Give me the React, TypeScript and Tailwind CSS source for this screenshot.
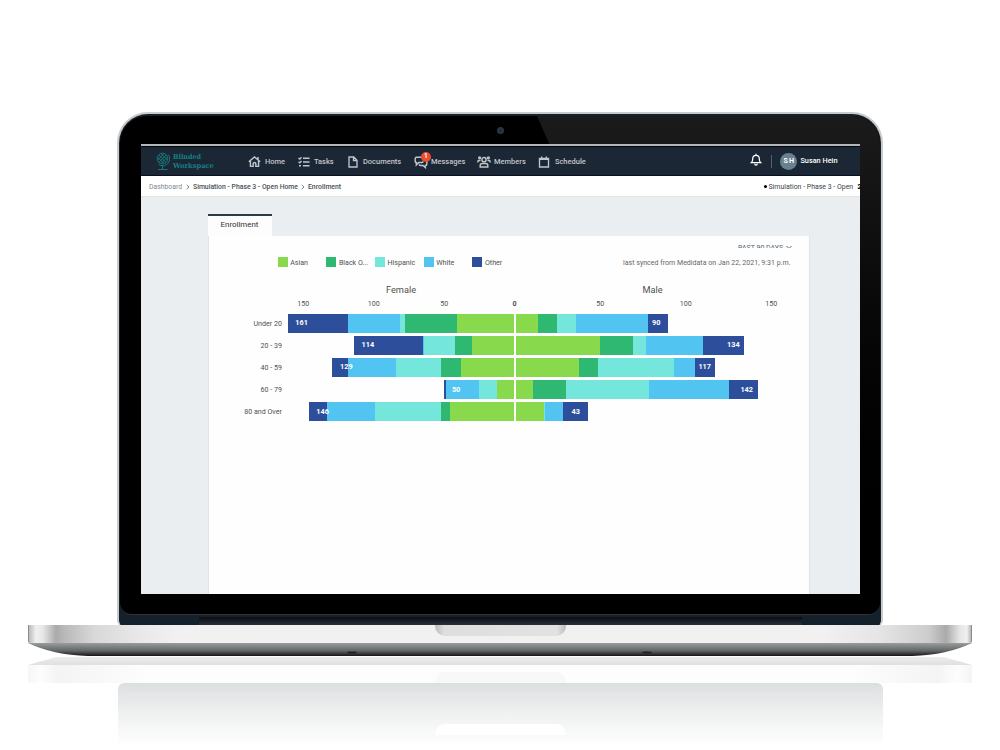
import React from "react";

const SERIES = [
  { name: "Asian", color: "bg-[#88da4c]" },
  { name: "Black O...", color: "bg-[#2fb872]" },
  { name: "Hispanic", color: "bg-[#74e6db]" },
  { name: "White", color: "bg-[#51c4f1]" },
  { name: "Other", color: "bg-[#2d4f9b]" },
];

// Segment widths run outwards from the zero line, in the order of SERIES
const ROWS = [
  { label: "Under 20", female: 161, male: 90, left: [57, 52, 4.3, 52.4, 60.3], right: [22.6, 19, 19, 71.7, 20.4], pad: 8 },
  { label: "20 - 39", female: 114, male: 134, left: [41.7, 17, 31, 1.3, 68.7], right: [84.3, 33, 13.5, 56.5, 40.7], pad: 4 },
  { label: "40 - 59", female: 129, male: 117, left: [52.7, 20, 45.3, 47.7, 15.6], right: [63.8, 18.5, 76, 20.8, 20.2], pad: 4 },
  { label: "60 - 79", female: 50, male: 142, left: [16.3, 0, 18.4, 33.3, 1.4], right: [17.8, 32.5, 83.5, 79.2, 29.3], pad: 5 },
  { label: "80 and Over", female: 146, male: 43, left: [64, 9, 66, 48, 18], right: [28.3, 0, 1.5, 17.3, 25.2], pad: 8 },
];

const icon = {
  viewBox: "0 0 24 24",
  fill: "none",
  stroke: "currentColor",
  strokeWidth: 2.7,
};

const HomeIcon = () => (
  <svg {...icon} className="w-[13px] h-[13px]">
    <path d="M1.5 12.500 12 3.500 22.500 12.500M4.500 10.500v10.500h5v-4.500a2.500 2.500 0 0 1 5 0v4.500h5V10.500M18.500 3.500v4.500" />
  </svg>
);

const TasksIcon = () => (
  <svg {...icon} className="w-[12px] h-[12px]">
    <path d="M10 4.500h13M10 12h13M10 19.500h13M1 4l2.500 2L7 2.500M1 11.500l2.500 2L7 10M2 19.500h4" />
  </svg>
);

const DocumentIcon = () => (
  <svg {...icon} className="w-[12px] h-[12px]">
    <path d="M4 2h9.500L20 8.500V22H4zM13 2v7h7" />
  </svg>
);

const MessagesIcon = () => (
  <svg {...icon} className="w-[14px] h-[14px]" strokeWidth={2.5}>
    <path d="M13 4H4.500Q2 4 2 6.500v4Q2 13 4 13v4l4-4h5q2.500 0 2.500-2.500" />
    <path d="M22 10v5.500q0 2.500-2.500 2.500v3.500L15.500 18H11q-2 0-2-2" />
  </svg>
);

const MembersIcon = () => (
  <svg {...icon} className="w-[14px] h-[14px]" strokeWidth={2.5}>
    <circle cx="12" cy="8" r="3.600" />
    <circle cx="4.500" cy="4.800" r="1.600" />
    <circle cx="19.500" cy="4.800" r="1.600" />
    <path d="M5.500 20.500V18q0-3.500 3.500-3.500h6q3.500 0 3.500 3.500v2.500zM1.500 13v-2q0-1.500 1.500-1.500h3M22.500 13v-2q0-1.500-1.500-1.500h-3" />
  </svg>
);

const CalendarIcon = () => (
  <svg {...icon} className="w-[12px] h-[12px]">
    <path d="M3 5h18v17H3zM3 6.500h18M7.500 1v4M16.500 1v4" />
  </svg>
);

const BellIcon = () => (
  <svg {...icon} className="mb-[3px] w-[12px] h-[13px] text-white" strokeWidth={2.5}>
    <path d="M3 18h18c-2-2-2.500-3.500-2.500-8a6.500 6.500 0 0 0-13 0c0 4.500-.5 6-2.500 8zM12 .500v3M9.500 20.500a2.500 2.500 0 0 0 5 0" />
  </svg>
);

const GlobeLogo = () => (
  <svg viewBox="0 0 14 19" className="mb-px w-[14px] h-[19px]" fill="none" stroke="#168085" strokeWidth="0.9">
    <circle cx="6.500" cy="6.500" r="5.300" />
    <path d="M2.800 3 10 10.300M5 1.700l6.400 6.400M1.500 5l6.300 6.300M10.200 3 3 10.200M8 1.700 1.600 8.100M11.500 5l-6.300 6.300" />
    <path d="M12.300 2.500a7 7 0 0 1-9.800 9.800M6.500 13.500v3.500M2 17.500h9.500" />
  </svg>
);

const NAV = [
  { label: "Home", Icon: HomeIcon, box: "w-[50px]", gap: "gap-[4px]" },
  { label: "Tasks", Icon: TasksIcon, box: "w-[49px]", gap: "gap-[4px]" },
  { label: "Documents", Icon: DocumentIcon, box: "w-[67px]", gap: "gap-[4px]" },
  { label: "Messages", Icon: MessagesIcon, box: "w-[63px]", gap: "gap-[3px]", badge: "1" },
  { label: "Members", Icon: MembersIcon, box: "w-[61px]", gap: "gap-[3px]" },
  { label: "Schedule", Icon: CalendarIcon, box: "w-[60px]", gap: "gap-[5px]" },
];

const TopBar = () => (
  <header className="flex h-[32px] shrink-0 items-center border-t-2 border-b border-t-[#b4b7b8] border-b-[#080f20] bg-[#1c2735] pt-[2px] text-[#c0c5cb] shadow-[inset_0_1px_0_#050709]">
    <div className="ml-[15px] flex w-[92.400px] items-center gap-[3px]">
      <GlobeLogo />
      <div className="pb-[2px] font-['DejaVu_Serif',serif] text-[7px] font-bold leading-[9px] text-[#168085]">
        <div className="w-[42px] origin-left scale-x-[0.92]">Blinded</div>
        <div className="w-[42px] origin-left scale-x-[0.96]">Workspace</div>
      </div>
    </div>
    <nav className="flex items-center text-[7.500px] font-medium">
      {NAV.map(({ label, Icon, box, gap, badge }) => (
        <div key={label} className={`relative flex items-center ${box} ${gap}`}>
          <Icon />
          <span>{label}</span>
          {badge && (
            <span className="absolute left-[7px] -top-[3px] flex h-[10px] w-[10px] items-center justify-center rounded-full bg-[#ee4d2b] text-[6.500px] font-bold text-white">
              {badge}
            </span>
          )}
        </div>
      ))}
    </nav>
    <div className="ml-auto flex items-center pb-[1px] pr-[22px]">
      <BellIcon />
      <div className="ml-[9px] h-[13px] w-px bg-[#536070]" />
      <div className="ml-[8px] flex h-[17px] w-[17px] items-center justify-center rounded-full bg-[#69808f] pl-px text-[7.200px] font-bold tracking-[1.200px] text-white">
        SH
      </div>
      <span className="ml-[3px] text-[7.300px] font-medium text-white">Susan Hein</span>
    </div>
  </header>
);

const Chevron = () => (
  <svg viewBox="0 0 4 6" className="mb-px ml-px h-[6px] w-[4px]" fill="none" stroke="#59656d" strokeWidth="0.8">
    <path d="M.7.8 3 3 .7 5.200" />
  </svg>
);

const Breadcrumb = () => (
  <div className="flex h-[21px] shrink-0 items-center whitespace-nowrap border-b border-[#dfe4e5] bg-white pt-[2px] pl-[8.500px] text-[6.850px] font-medium text-[#465058]">
    <span className="w-[36px] font-normal text-[#798a94]">Dashboard</span>
    <Chevron />
    <span className="ml-[3px] w-[107px]">Simulation - Phase 3 - Open Home</span>
    <Chevron />
    <span className="ml-[3px]">Enrollment</span>
    <div className="ml-auto flex items-center text-[#39424a]">
      <span className="mr-[2px] h-[3px] w-[3px] rounded-full bg-black" />
      <span className="w-[89px] text-[6.950px] font-normal">Simulation - Phase 3 - Open</span>
      <span className="w-[2px] font-bold text-black">2</span>
    </div>
  </div>
);

type BarProps = { widths: number[]; side: "left" | "right"; value: number; pad: number };

const Bar: React.FC<BarProps> = ({ widths, side, value, pad }) => (
  <div className={`relative flex h-[19px] ${side === "left" ? "flex-row-reverse" : ""}`}>
    {widths.map((w, i) => (
      <div key={i} className={`shrink-0 ${SERIES[i].color}`} style={{ width: w }} />
    ))}
    <span
      className="absolute inset-y-0 flex items-center pt-px text-[7.300px] font-bold text-white"
      style={side === "left" ? { left: pad } : { right: pad }}
    >
      {value}
    </span>
  </div>
);

const EnrollmentChart = () => (
  <div className="flex flex-col text-[7.100px] text-[#505050]">
    <div className="flex h-[10px] items-center pl-[69px]">
      {SERIES.map((s) => (
        <div key={s.name} className="flex w-[48.700px] shrink-0 items-center gap-[2.700px]">
          <span className={`h-[10px] w-[10px] ${s.color}`} />
          <span className="pt-[2px]">{s.name}</span>
        </div>
      ))}
      <span className="ml-auto mr-[18px] pt-[2px] text-[7.050px] text-[#666]">
        last synced from Medidata on Jan 22, 2021, 9:31 p.m.
      </span>
    </div>
    <div className="mt-[17px] flex h-[12px] items-center text-[9.200px]">
      <span className="w-[385px] text-center">Female</span>
      <span className="w-[118px] text-center">Male</span>
    </div>
    <div className="mt-[3px] flex h-[10px] items-center pl-[59.500px]">
      {["150", "100", "50"].map((t) => (
        <span key={t} className="w-[70.500px] shrink-0 text-center">{t}</span>
      ))}
      <span className="w-[70px] shrink-0 text-center font-bold">0</span>
      <div className="ml-[8px] flex shrink-0">
        {["50", "100", "150"].map((t) => (
          <span key={t} className="w-[85.500px] shrink-0 text-center">{t}</span>
        ))}
      </div>
    </div>
    <div className="mt-[4.600px] flex flex-col gap-[3.150px]">
      {ROWS.map((r) => (
        <div key={r.label} className="flex h-[19px] items-center">
          <span className="w-[73.400px] pt-[2px] text-right">{r.label}</span>
          <div className="flex w-[231.800px] justify-end">
            <Bar widths={r.left} side="left" value={r.female} pad={7.6} />
          </div>
          <div className="ml-[2px] flex">
            <Bar widths={r.right} side="right" value={r.male} pad={r.pad} />
          </div>
        </div>
      ))}
    </div>
  </div>
);

const Screen = () => (
  <div className="flex h-[450px] w-[719px] flex-col overflow-hidden bg-[#eaeef1]">
    <TopBar />
    <Breadcrumb />
    <main className="ml-[67px] mt-[17px] flex w-[602px] grow flex-col">
      <div className="h-[22px] w-[64px] border-t-2 border-[#2b3d48] bg-[#fdfdfd] pt-[3px] text-center text-[7.900px] leading-[12px] text-[#2b3136]">
        Enrollment
      </div>
      <section className="grow border-x border-[#dfe4e8] bg-[#fefefe]">
        <div className="ml-[529.500px] mt-[8px] flex h-[4px] items-start gap-[2.500px] overflow-hidden text-[7px] leading-[9px] text-[#4c6472]">
          <span className="whitespace-nowrap">PAST 90 DAYS</span>
          <svg viewBox="0 0 6 6" className="mt-px h-[6px] w-[6px] shrink-0" fill="none" stroke="currentColor">
            <path d="M.5 1 3 3.500 5.500 1" />
          </svg>
        </div>
        <div className="mt-[9px]">
          <EnrollmentChart />
        </div>
      </section>
    </main>
  </div>
);

const Lid = () => (
  <div className="flex h-[514px] w-[766px] flex-col overflow-hidden rounded-t-[31px] rounded-b-[6px] border-2 border-b-0 border-[#c9cbcb] bg-[#14212d] px-px pt-[2px]">
    <div className="relative flex h-[499px] flex-col items-center rounded-t-[27px] rounded-b-[12px] border-b border-[#333] bg-black pt-[28px]">
      <div className="absolute right-0 top-0 h-full w-[348px] rounded-tr-[27px] rounded-br-[12px] bg-linear-to-b from-[#1b1b1b] to-black [clip-path:polygon(5px_0,100%_0,100%_100%,223px_100%)]" />
      <div className="absolute left-[377px] top-[11px] h-[7px] w-[7px] rounded-full border-2 border-[#30343b] bg-[#132c59]" />
      <div className="relative">
        <Screen />
      </div>
    </div>
    <div className="mx-auto mt-[2px] h-[9px] w-[603px] border-b border-black bg-linear-to-b from-[#0b0d11] to-[#28303b]" />
  </div>
);

const Base = () => (
  <div className="flex w-[944px] flex-col items-center">
    <div className="flex h-[18px] w-full justify-center rounded-b-[2px] border-x border-[#8b8b8b] bg-[linear-gradient(90deg,#bbb_0,#f0f0f0_7px,#e6e6e6_14px,#aaa_27px,#b8b8b8_35px,#d8d8d8_65px,#e8e8e8_110px,#f1f1f1_150px,#f1f1f1_794px,#e5e5e5_850px,#ccc_900px,#aaa_917px,#e6e6e6_931px,#f0f0f0_938px,#999_944px)]">
      <div className="h-[11px] w-[131px] rounded-b-[10px] bg-[linear-gradient(90deg,#bbb,#dedede_9px,#e2e2e2_122px,#bbb)]" />
    </div>
    <svg viewBox="0 0 944 14" className="h-[14px] w-full">
      <defs>
        <linearGradient id="under" x2="0" y2="1">
          <stop offset="0" stopColor="#9a9d9e" />
          <stop offset="0.600" stopColor="#626566" />
          <stop offset="1" stopColor="#161414" />
        </linearGradient>
      </defs>
      <path d="M0 0H944Q919 12 884 13H60Q25 12 0 0Z" fill="url(#under)" />
      <ellipse cx="324" cy="9.500" rx="5" ry="1" fill="#222" />
      <ellipse cx="619" cy="9.500" rx="5" ry="1" fill="#222" />
    </svg>
  </div>
);

const Reflection = () => (
  <div className="flex w-[944px] flex-col items-center">
    <div className="h-[8px] w-full bg-linear-to-b from-[#ececec] to-[#e0e0e0] [clip-path:polygon(28px_0,916px_0,100%_100%,0_100%)]" />
    <div className="flex h-[18px] w-full items-end justify-center bg-[linear-gradient(90deg,#f6f6f6,#fdfdfd_12px,#f4f4f4_30px,#fdfdfd_120px,#fdfdfd_824px,#f4f4f4_910px,#fdfdfd_930px,#f4f4f4)]">
      <div className="h-[11px] w-[131px] rounded-t-[10px] bg-[#f8f8f8]" />
    </div>
    <div className="flex h-[63px] w-[765px] flex-col items-center rounded-t-[6px] bg-linear-to-b from-[#dcdfe0] via-[#f0f1f1] to-white">
      <div className="mt-[11px] h-[52px] w-[762px] rounded-t-[12px] border-t border-[#e8eaea]">
        <div className="mx-auto mt-[29px] h-[11px] w-[131px] rounded-t-[10px] bg-white" />
      </div>
    </div>
  </div>
);

const App: React.FC = () => {
  return (
    <div className="flex h-[750px] w-[1000px] flex-col items-center overflow-hidden bg-white pt-[112px] font-['Roboto',sans-serif]">
      <Lid />
      <div className="-mt-px">
        <Base />
        <Reflection />
      </div>
    </div>
  );
};

export default App;
